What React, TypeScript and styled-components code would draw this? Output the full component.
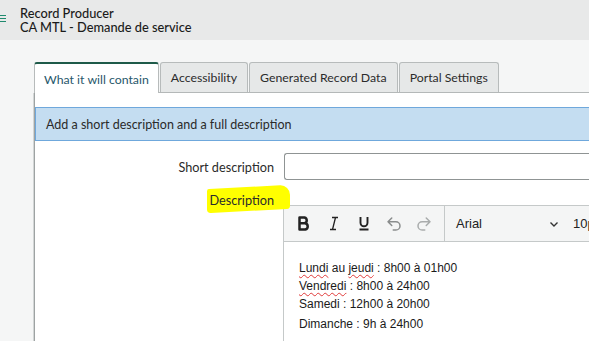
import React from "react";
import styled, { createGlobalStyle } from "styled-components";

const Global = createGlobalStyle`
  html, body { margin: 0; padding: 0; }
  body {
    background: #f5f6f6;
    font-family: Lato, "Open Sans", sans-serif;
    color: #2e2e2e;
    overflow: hidden;
    width: 589px;
    height: 341px;
  }
`;

const Header = styled.header`
  height: 40px;
  background: #e8e9e9;
  display: flex;
  align-items: center;
  gap: 14px;
  box-sizing: border-box;
  padding-bottom: 1px;
`;

const Burger = styled.div`
  width: 6px;
  display: flex;
  flex-direction: column;
  gap: 2px;
  margin-top: -2px;
  span {
    display: block;
    height: 1px;
    background: #1f8a6e;
  }
`;

const Titles = styled.div`
  display: flex;
  flex-direction: column;
  font-size: 12.8px;
  line-height: 14px;
  color: #1b1b1b;
  font-weight: 500;
`;

const Main = styled.main`
  padding: 22px 0 0 34px;
`;

const TabBar = styled.div`
  display: flex;
  align-items: flex-end;
  height: 31px;
  border-bottom: 1px solid #b4b8b8;
  box-sizing: border-box;
`;

const Tab = styled.div<{ $active?: boolean }>`
  height: ${(p) => (p.$active ? "31px" : "30px")};
  box-sizing: border-box;
  padding: 0 ${(p) => (p.$active ? "9px" : "10px")};
  margin-right: 1px;
  display: flex;
  align-items: center;
  font-size: 12.3px;
  white-space: nowrap;
  border: 1px solid #b7bbbb;
  border-bottom: none;
  border-radius: 3px 3px 0 0;
  background: ${(p) => (p.$active ? "#ffffff" : "#e6e8e8")};
  color: ${(p) => (p.$active ? "#27576b" : "#2b2b2b")};
  border-top: ${(p) => (p.$active ? "2px solid #1e5a49" : "1px solid #b7bbbb")};
  margin-bottom: ${(p) => (p.$active ? "-1px" : "0")};
  padding-top: ${(p) => (p.$active ? "1px" : "0")};
  position: relative;
  z-index: ${(p) => (p.$active ? 1 : 0)};
`;

const Panel = styled.section`
  background: #ffffff;
  border-left: 1px solid #9ea3a3;
  box-shadow: -1px 0 0 #d3d6d6;
  height: 260px;
  padding-top: 14px;
  box-sizing: border-box;
`;

const Notice = styled.div`
  height: 34px;
  box-sizing: border-box;
  background: #c4ddf1;
  border: 1px solid #6fa8dc;
  border-right: none;
  display: flex;
  align-items: center;
  padding-left: 10px;
  font-size: 12.5px;
  color: #2a2a2a;
  white-space: nowrap;
`;

const Row = styled.div<{ $top: number }>`
  display: grid;
  grid-template-columns: 239px 1fr;
  column-gap: 10px;
  margin-top: ${(p) => p.$top}px;
  align-items: start;
`;

const Label = styled.label<{ $mark?: boolean }>`
  justify-self: end;
  font-size: 12.7px;
  line-height: 20px;
  color: #2b2b2b;
  white-space: nowrap;
  position: relative;
  margin-top: ${(p) => (p.$mark ? "3px" : "4px")};
  z-index: 0;
  ${(p) =>
    p.$mark &&
    `
    &::before {
      content: "";
      position: absolute;
      left: -2px;
      right: -16px;
      top: -3px;
      bottom: -1px;
      background: #ffff00;
      border-radius: 2px 10px 3px 4px;
      transform: skewY(-3deg);
      z-index: -1;
    }
  `}
`;

const Input = styled.div`
  height: 27px;
  box-sizing: border-box;
  border: 1px solid #8f9494;
  border-right: none;
  border-radius: 3px 0 0 3px;
  background: #fff;
`;

const Editor = styled.div`
  margin-top: 18px;
  margin-left: -1px;
  border: 1px solid #c5c9c9;
  border-right: none;
  height: 140px;
  box-sizing: border-box;
`;

const Toolbar = styled.div`
  height: 36px;
  background: #f4f5f5;
  border-bottom: 1px solid #c5c9c9;
  display: flex;
  align-items: center;
  box-sizing: border-box;
`;

const ToolGroup = styled.div`
  display: flex;
  align-items: center;
  box-sizing: border-box;
  width: 161px;
  padding-left: 5px;
  height: 100%;
  border-right: 1px solid #c5c9c9;
`;

const ToolBtn = styled.div<{ $dim?: string }>`
  width: 30px;
  height: 28px;
  display: flex;
  align-items: center;
  justify-content: center;
  color: ${(p) => p.$dim || "#222"};
`;

const FontSelect = styled.div`
  display: flex;
  align-items: center;
  justify-content: space-between;
  box-sizing: border-box;
  width: 124px;
  padding: 0 10px 0 11px;
  font-family: "Liberation Sans", Arial, sans-serif;
  font-size: 13px;
  color: #222;
`;

const SizeSelect = styled.div`
  font-family: "Liberation Sans", Arial, sans-serif;
  font-size: 13px;
  color: #222;
  padding-left: 4px;
  white-space: nowrap;
`;

const Body = styled.div`
  padding: 17px 0 0 15px;
  font-family: "Liberation Sans", Arial, sans-serif;
  font-size: 12px;
  color: #1a1a1a;
`;

const Line = styled.div<{ $gap?: number }>`
  line-height: 18px;
  margin-top: ${(p) => p.$gap || 0}px;
  white-space: nowrap;
`;

const Spell = styled.span`
  text-decoration: underline wavy #e03a3a;
  text-decoration-thickness: 1px;
  text-underline-offset: 2px;
`;

const Icon = ({ d, w = 18 }: { d: string; w?: number }) => (
  <svg width={w} height={w} viewBox="0 0 24 24" fill="none" stroke="currentColor" strokeWidth="2" strokeLinecap="round" strokeLinejoin="round">
    <path d={d} />
  </svg>
);

export default function App() {
  return (
    <>
      <Global />
      <Header>
        <Burger>
          <span />
          <span />
          <span />
        </Burger>
        <Titles>
          <span>Record Producer</span>
          <span>CA MTL - Demande de service</span>
        </Titles>
      </Header>
      <Main>
        <TabBar>
          <Tab $active>What it will contain</Tab>
          <Tab>Accessibility</Tab>
          <Tab>Generated Record Data</Tab>
          <Tab>Portal Settings</Tab>
        </TabBar>
        <Panel>
          <Notice>Add a short description and a full description</Notice>
          <Row $top={12}>
            <Label>Short description</Label>
            <Input />
          </Row>
          <Row $top={7}>
            <Label $mark>Description</Label>
            <Editor>
              <Toolbar>
                <ToolGroup>
                  <ToolBtn>
                    <svg width="14" height="15" viewBox="0 0 14 15">
                      <path d="M2.5 1.5h5a3 3 0 0 1 0 5.8h-5zM2.5 7.3h5.8a3.2 3.2 0 0 1 0 6.2H2.5z" fill="none" stroke="#222" strokeWidth="2.5" strokeLinejoin="round" />
                    </svg>
                  </ToolBtn>
                  <ToolBtn>
                    <svg width="14" height="15" viewBox="0 0 14 15">
                      <path d="M5 1.5h6M3 13.5h6M8.5 1.5l-3 12" fill="none" stroke="#222" strokeWidth="1.3" />
                    </svg>
                  </ToolBtn>
                  <ToolBtn>
                    <svg width="14" height="15" viewBox="0 0 14 15">
                      <path d="M3.5 1v5.8a3.5 3.5 0 0 0 7 0V1M2.5 13.5h9" fill="none" stroke="#222" strokeWidth="1.9" />
                    </svg>
                  </ToolBtn>
                  <ToolBtn $dim="#8a8d8d">
                    <Icon d="M9 14 4 9l5-5M4 9h10.5a5.5 5.5 0 0 1 5.5 5.5 5.5 5.5 0 0 1-5.5 5.5H11" />
                  </ToolBtn>
                  <ToolBtn $dim="#a9acac">
                    <Icon d="m15 14 5-5-5-5M20 9H9.5A5.5 5.5 0 0 0 4 14.5 5.5 5.5 0 0 0 9.5 20H13" />
                  </ToolBtn>
                </ToolGroup>
                <FontSelect>
                  <span>Arial</span>
                  <svg width="10" height="10" viewBox="0 0 10 10">
                    <path d="M1.5 3.5 5 7l3.5-3.5" fill="none" stroke="#333" strokeWidth="1.4" />
                  </svg>
                </FontSelect>
                <SizeSelect>10pt</SizeSelect>
              </Toolbar>
              <Body>
                <Line>
                  <Spell>Lundi</Spell> au <Spell>jeudi</Spell> : 8h00 à 01h00
                </Line>
                <Line>
                  <Spell>Vendredi</Spell> : 8h00 à 24h00
                </Line>
                <Line>Samedi : 12h00 à 20h00</Line>
                <Line $gap={2}>Dimanche : 9h à 24h00</Line>
              </Body>
            </Editor>
          </Row>
        </Panel>
      </Main>
    </>
  );
}
